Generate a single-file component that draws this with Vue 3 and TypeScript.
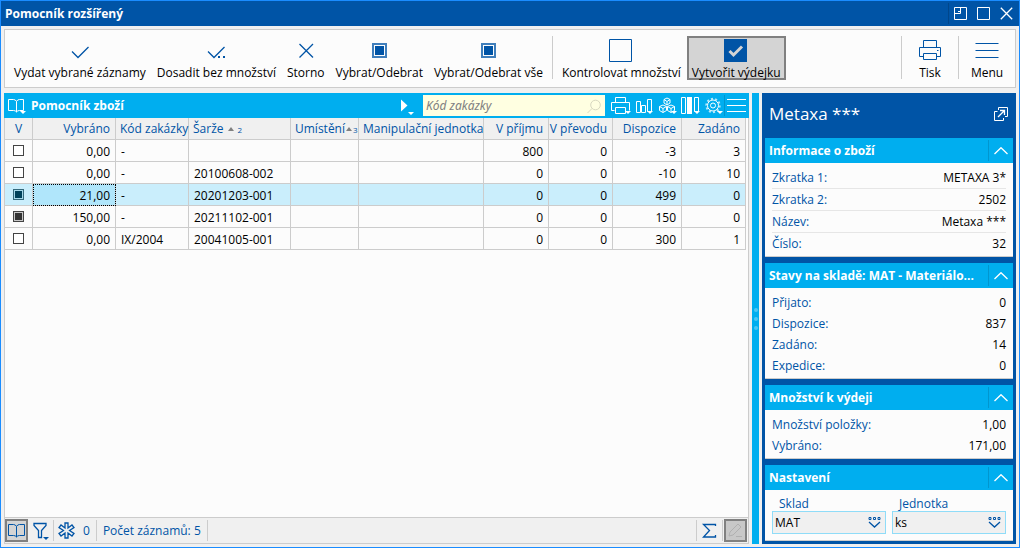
<script setup lang="ts">
import { ref } from 'vue'

interface Row {
  mark: 'none' | 'full'
  picked: string
  order: string
  batch: string
  incoming: string
  transfer: string
  available: string
  entered: string
}

interface InfoGroup {
  title: string
  lined?: boolean
  rows: { label: string; value: string }[]
}

const rows = ref<Row[]>([
  { mark: 'none', picked: '0,00', order: '-', batch: '', incoming: '800', transfer: '0', available: '-3', entered: '3' },
  { mark: 'none', picked: '0,00', order: '-', batch: '20100608-002', incoming: '0', transfer: '0', available: '-10', entered: '10' },
  { mark: 'full', picked: '21,00', order: '-', batch: '20201203-001', incoming: '0', transfer: '0', available: '499', entered: '0' },
  { mark: 'full', picked: '150,00', order: '-', batch: '20211102-001', incoming: '0', transfer: '0', available: '150', entered: '0' },
  { mark: 'none', picked: '0,00', order: 'IX/2004', batch: '20041005-001', incoming: '0', transfer: '0', available: '300', entered: '1' },
])
const current = ref(2)

const groups: InfoGroup[] = [
  {
    title: 'Informace o zboží',
    lined: true,
    rows: [
      { label: 'Zkratka 1:', value: 'METAXA 3*' },
      { label: 'Zkratka 2:', value: '2502' },
      { label: 'Název:', value: 'Metaxa ***' },
      { label: 'Číslo:', value: '32' },
    ],
  },
  {
    title: 'Stavy na skladě: MAT - Materiálo...',
    rows: [
      { label: 'Přijato:', value: '0' },
      { label: 'Dispozice:', value: '837' },
      { label: 'Zadáno:', value: '14' },
      { label: 'Expedice:', value: '0' },
    ],
  },
  {
    title: 'Množství k výdeji',
    rows: [
      { label: 'Množství položky:', value: '1,00' },
      { label: 'Vybráno:', value: '171,00' },
    ],
  },
]

const search = ref('')
const store = ref('MAT')
const unit = ref('ks')

function toggle(row: Row) {
  row.mark = row.mark === 'none' ? 'full' : 'none'
}
</script>

<template>
  <div class="window">
    <header class="titlebar">
      <h1>Pomocník rozšířený</h1>
      <div class="wincontrols">
        <button type="button" aria-label="Ukotvit">
          <svg width="13" height="13" viewBox="0 0 13 13"><path d="M.5 .5h12v12H.5zM.5 6.5h6V.5M4 4.5h2.5" /></svg>
        </button>
        <button type="button" aria-label="Maximalizovat">
          <svg width="13" height="13" viewBox="0 0 13 13"><path d="M.5 .5h12v12H.5z" /></svg>
        </button>
        <button type="button" aria-label="Zavřít">
          <svg width="13" height="13" viewBox="0 0 13 13"><path class="firm" d="M.8 .8l11.4 11.4M12.2 .8L.8 12.2" /></svg>
        </button>
      </div>
    </header>

    <nav class="toolbar">
      <button type="button" class="tool">
        <svg width="24" height="24" viewBox="0 0 24 24"><path class="firm" d="M4 12.500l6 6L20.500 8" /></svg>
        <span>Vydat vybrané záznamy</span>
      </button>
      <button type="button" class="tool">
        <svg width="24" height="24" viewBox="0 0 24 24"><path class="firm" d="M4 12.500l6 6L20.500 8" /><path class="solid" d="M14 17h2v2h-2zM19 17h2v2h-2z" /></svg>
        <span>Dosadit bez množství</span>
      </button>
      <button type="button" class="tool">
        <svg width="24" height="24" viewBox="0 0 24 24"><path class="firm" d="M5.500 5l13.500 13.500M19 5L5.500 18.500" /></svg>
        <span>Storno</span>
      </button>
      <button type="button" class="tool">
        <svg width="24" height="24" viewBox="0 0 24 24"><path class="soft" d="M6 5h13v13H6z" /><path class="solid" d="M8 7h9v9H8z" /></svg>
        <span>Vybrat/Odebrat</span>
      </button>
      <button type="button" class="tool">
        <svg width="24" height="24" viewBox="0 0 24 24"><path class="soft" d="M6 5h13v13H6z" /><path class="solid" d="M8 7h9v9H8z" /></svg>
        <span>Vybrat/Odebrat vše</span>
      </button>
      <i class="rule"></i>
      <button type="button" class="tool">
        <svg width="24" height="24" viewBox="0 0 24 24"><path d="M.5 .5h22v22H.5z" /></svg>
        <span>Kontrolovat množství</span>
      </button>
      <button type="button" class="tool pressed" aria-pressed="true">
        <svg width="24" height="24" viewBox="0 0 24 24"><path class="solid" d="M0 0h23v23H0z" /><path class="tick" d="M5.500 12l4 4L18 7.500" /></svg>
        <span>Vytvořit výdejku</span>
      </button>
      <div class="spacer"></div>
      <i class="rule"></i>
      <button type="button" class="tool narrow">
        <svg width="24" height="24" viewBox="0 0 24 24"><path d="M5.500 8V1.500h13V8M5 17.500H1.500v-9h21v9H19M5.500 14.500h13v6h-13zM19 11.500h1.500" /></svg>
        <span>Tisk</span>
      </button>
      <i class="rule"></i>
      <button type="button" class="tool narrow">
        <svg width="24" height="24" viewBox="0 0 24 24"><path d="M.5 4.500h23M.5 11.500h23M.5 18.500h23" /></svg>
        <span>Menu</span>
      </button>
    </nav>

    <main class="content">
      <section class="browse">
        <div class="bar">
          <button type="button" class="baricon book" aria-label="Přehled">
            <svg width="23" height="21" viewBox="0 0 23 21"><path d="M12.500 6.500q-1-2-3-2h-5v11h5q2 0 3 1.500q1-1.500 3-1.500h4v-11h-4q-2 0-3 2zV17" /><path class="fill" d="M16 16h6l-3 3z" /></svg>
          </button>
          <h2>Pomocník zboží</h2>
          <button type="button" class="baricon play" aria-label="Spustit">
            <svg width="23" height="21" viewBox="0 0 23 21"><path class="fill" d="M4 4.500l6.500 6-6.500 6zM11 17h6l-3 3z" /></svg>
          </button>
          <div class="search">
            <input v-model="search" type="text" aria-label="Kód zakázky" placeholder="Kód zakázky" />
            <svg width="16" height="16" viewBox="0 0 16 16"><circle cx="9.500" cy="6" r="4.800" /><path d="M6 9.500L1.500 14" /></svg>
          </div>
          <button type="button" class="baricon" aria-label="Tisk">
            <svg width="23" height="21" viewBox="0 0 23 21"><path d="M6.500 8V2.500h10V8M5.500 15.500h-3v-8h18v8M6.500 12.500h10v6h-10z" /><path class="fill" d="M16 16h6l-3 3z" /></svg>
          </button>
          <button type="button" class="baricon" aria-label="Grafy">
            <svg width="23" height="21" viewBox="0 0 23 21"><path d="M4.500 6.500h4v11h-4zM9.500 10.500h4v7h-4zM15.500 4.500h4v12h-4z" /><path class="fill" d="M15 16h6l-3 3z" /></svg>
          </button>
          <button type="button" class="baricon" aria-label="Kontingenční tabulka">
            <svg width="23" height="21" viewBox="0 0 23 21"><path d="M12 3l3 1.500v3.500l-3 2-3-2V4.500zM9 4.500l3 2 3-2M12 6.500V10M8 10l3.500 1.500v4L8 17.500l-3.500-2v-4zM4.500 11.500l3.500 2 3.500-2M8 13.500v4M16 10l3.500 1.500v4L16 17.500l-3.500-2v-4zM12.500 11.500l3.500 2 3.500-2M16 13.500v4" /><path class="fill" d="M16 16h6l-3 3z" /></svg>
          </button>
          <button type="button" class="baricon" aria-label="Sloupce">
            <svg width="23" height="21" viewBox="0 0 23 21"><path d="M3.500 2.500h4v16h-4zM16.500 2.500h4v14h-4z" /><path class="fill" d="M9 2h5v17H9zM16 16h6l-3 3z" /></svg>
          </button>
          <button type="button" class="baricon" aria-label="Nastavení">
            <svg width="23" height="21" viewBox="0 0 23 21"><circle cx="12" cy="10.500" r="5.500" /><circle cx="12" cy="10.500" r="2.500" /><circle class="teeth" cx="12" cy="10.500" r="6.700" pathLength="20" /><path class="fill" d="M16 16h6l-3 3z" /></svg>
          </button>
          <button type="button" class="baricon last" aria-label="Menu">
            <svg width="24" height="21" viewBox="0 0 24 21"><path d="M2 4.500h19M2 10.500h19M2 16.500h19" /></svg>
          </button>
        </div>

        <div class="gridbox">
          <table>
            <colgroup>
              <col class="c-mark" /><col class="c-picked" /><col class="c-order" /><col class="c-batch" /><col class="c-place" />
              <col class="c-unit" /><col class="c-in" /><col class="c-trans" /><col class="c-avail" /><col class="c-ent" />
            </colgroup>
            <thead>
              <tr>
                <th class="mid">V</th>
                <th class="num">Vybráno</th>
                <th>Kód zakázky</th>
                <th>Šarže<i class="sort wide"></i><small>2</small></th>
                <th>Umístění<i class="sort"></i><small>3</small></th>
                <th>Manipulační jednotka</th>
                <th class="num">V příjmu</th>
                <th class="num">V převodu</th>
                <th class="num">Dispozice</th>
                <th class="num">Zadáno</th>
              </tr>
            </thead>
            <tbody>
              <tr v-for="(row, i) in rows" :key="i" :class="{ current: i === current }" @click="current = i">
                <td class="mid">
                  <input type="checkbox" :checked="row.mark === 'full'" :aria-label="'Vybrat ' + row.batch" @change="toggle(row)" />
                </td>
                <td class="num" :class="{ focus: i === current }">{{ row.picked }}</td>
                <td>{{ row.order }}</td>
                <td>{{ row.batch }}</td>
                <td></td>
                <td></td>
                <td class="num">{{ row.incoming }}</td>
                <td class="num">{{ row.transfer }}</td>
                <td class="num">{{ row.available }}</td>
                <td class="num">{{ row.entered }}</td>
              </tr>
            </tbody>
          </table>
        </div>

        <footer class="status">
          <button type="button" class="square" aria-label="Přehled">
            <svg width="19" height="19" viewBox="0 0 19 19"><path d="M9.500 5.500q-1-2-3-2h-5v11h5q2 0 3 1.500q1-1.500 3-1.500h5v-11h-5q-2 0-3 2zV16" /></svg>
          </button>
          <button type="button" class="flat" aria-label="Filtr">
            <svg width="23" height="21" viewBox="0 0 23 21"><path class="firm" d="M5 3.500h12v2l-4.500 5v7h-3v-7L5 5.500z" /><path class="fill" d="M14 17h6l-3 3z" /></svg>
          </button>
          <i class="rule"></i>
          <button type="button" class="flat count">
            <svg width="19" height="21" viewBox="0 0 19 21"><path class="firm" d="M8 3h3v5l4-3 2 2.500-4.500 3 4.500 3-2 2.500-4-3v5H8v-5l-4 3-2-2.500 4.500-3-4.500-3L4 5l4 3z" /></svg>
            <span>0</span>
          </button>
          <i class="rule"></i>
          <span class="records">Počet záznamů: 5</span>
          <i class="rule"></i>
          <div class="spacer"></div>
          <i class="rule"></i>
          <button type="button" class="flat" aria-label="Součet">
            <svg width="23" height="21" viewBox="0 0 23 21"><path class="firm" d="M17.500 6V4.500h-12l6 6-6 6.500h12V15" /></svg>
          </button>
          <i class="rule"></i>
          <button type="button" class="square off" aria-label="Upravit" disabled>
            <svg width="19" height="19" viewBox="0 0 19 19"><path d="M3 15l1-4 8-8 3 3-8 8zM10 15.500h6" /></svg>
          </button>
        </footer>
      </section>

      <div class="splitter"><i></i><i></i><i></i></div>

      <aside class="detail">
        <header>
          <h2>Metaxa ***</h2>
          <button type="button" aria-label="Otevřít v novém okně">
            <svg width="14" height="14" viewBox="0 0 14 14"><path d="M4.500 3V.5h9v9H11M3.500 4.500h-3v9h9V11" /><path class="firm" d="M4 10l6-6M6 3.500h4.500V8" /></svg>
          </button>
        </header>

        <div class="groups">
          <section v-for="g in groups" :key="g.title" class="group">
            <div class="ghead">
              <h3>{{ g.title }}</h3>
              <button type="button" aria-label="Sbalit">
                <svg width="14" height="8" viewBox="0 0 14 8"><path class="firm" d="M.5 7l6.500-6.300L13.500 7" /></svg>
              </button>
            </div>
            <dl :class="{ lined: g.lined }">
              <div v-for="r in g.rows" :key="r.label">
                <dt>{{ r.label }}</dt>
                <dd>{{ r.value }}</dd>
              </div>
            </dl>
          </section>

          <section class="group">
            <div class="ghead">
              <h3>Nastavení</h3>
              <button type="button" aria-label="Sbalit">
                <svg width="14" height="8" viewBox="0 0 14 8"><path class="firm" d="M.5 7l6.500-6.300L13.500 7" /></svg>
              </button>
            </div>
            <div class="fields">
              <div class="field">
                <label for="store">Sklad</label>
                <div class="pick">
                  <select id="store" v-model="store"><option>MAT</option></select>
                  <svg width="13" height="11" viewBox="0 0 13 11"><path d="M1 .5h2v2H1zM5.500 .5h2v2h-2zM10 .5h2v2h-2z" /><path class="firm" d="M1 5l5.500 5L12 5" /></svg>
                </div>
              </div>
              <div class="field">
                <label for="unit">Jednotka</label>
                <div class="pick">
                  <select id="unit" v-model="unit"><option>ks</option></select>
                  <svg width="13" height="11" viewBox="0 0 13 11"><path d="M1 .5h2v2H1zM5.500 .5h2v2h-2zM10 .5h2v2h-2z" /><path class="firm" d="M1 5l5.500 5L12 5" /></svg>
                </div>
              </div>
            </div>
          </section>
        </div>
      </aside>
    </main>
  </div>
</template>

<style>
html,
body {
  margin: 0;
  background: #f0f0f0;
}
</style>

<style scoped>
.window {
  --navy: #0054a6;
  --sky: #00aeef;
  --line: #cccccc;
  --paper: #fcfcfc;
  box-sizing: border-box;
  min-height: 100vh;
  display: flex;
  flex-direction: column;
  border: 1px solid #1a8cff;
  background: #f0f0f0;
  color: #000;
  font: 12px/16px 'Open Sans', 'Noto Sans', sans-serif;
}
* {
  box-sizing: border-box;
}
h1,
h2,
h3,
dl,
dd {
  margin: 0;
}
h1,
h2,
h3 {
  font-size: 12px;
}
button {
  font: inherit;
  color: inherit;
  border: 0;
  padding: 0;
  background: none;
}
svg {
  display: block;
  flex: none;
  fill: none;
  stroke: currentColor;
}
.firm {
  stroke-width: 1.3;
}
.fill,
.solid {
  fill: currentColor;
  stroke: none;
}
.spacer {
  flex: 1;
}
.rule {
  width: 1px;
  background: var(--line);
}

.titlebar {
  display: flex;
  justify-content: space-between;
  height: 25px;
  background: var(--navy);
  color: #fff;
}
.titlebar h1 {
  padding-left: 4px;
  line-height: 25px;
}
.wincontrols {
  display: flex;
  align-items: center;
  gap: 10px;
  margin: 2px 0;
  padding: 0 6px 0 5px;
  border-left: 1px solid #00468b;
}

.toolbar {
  display: flex;
  gap: 1px;
  height: 59px;
  margin: 3px 3px 5px;
  padding: 6px 4px;
  border: 1px solid var(--line);
  background: var(--paper);
}
.toolbar .rule {
  height: 43px;
  margin: 0 3px;
}
.tool {
  display: flex;
  flex-direction: column;
  align-items: center;
  height: 44px;
  padding: 1px 3px 0;
  border: 2px solid transparent;
  white-space: nowrap;
}
.tool svg {
  color: var(--navy);
}
.tool span {
  margin-top: 2px;
}
.tool.pressed {
  border-color: #808080;
  background: #d4d4d4;
}
.tool.narrow {
  min-width: 48px;
}
.soft {
  stroke-width: 2;
  opacity: 0.75;
}
.tick {
  stroke: #d4d4d4;
  stroke-width: 3;
}

.content {
  flex: 1;
  display: grid;
  grid-template-columns: minmax(0, 1fr) 7px 254px;
  gap: 3px;
  padding: 0 3px 3px;
}

.browse {
  display: flex;
  flex-direction: column;
  min-width: 0;
}
.bar {
  display: flex;
  align-items: center;
  height: 25px;
  background: var(--sky);
  color: #fff;
}
.bar h2 {
  flex: 1;
  padding-left: 4px;
}
.baricon.play {
  margin-right: 3px;
}
.baricon.last {
  border-left: 1px solid #0096cf;
}
.teeth {
  stroke-width: 2;
  stroke-dasharray: 1 1;
  opacity: 0.7;
}
.search {
  position: relative;
  width: 182px;
  height: 21px;
  margin-right: 4px;
  color: #d8d8c0;
}
.search input {
  width: 100%;
  height: 100%;
  padding: 0 22px 0 3px;
  border: 0;
  background: #ffffe1;
  font: italic 12px/16px 'Noto Sans', 'Open Sans', sans-serif;
}
.search input::placeholder {
  color: #808080;
}
.search svg {
  position: absolute;
  top: 4px;
  right: 3px;
}

.gridbox {
  flex: 1;
  padding-right: 2px;
  border: 1px solid var(--line);
  border-top: 0;
  background: var(--paper);
}
table {
  width: 100%;
  table-layout: fixed;
  border-collapse: separate;
  border-spacing: 0;
}
.c-mark { width: 28px; }
.c-picked { width: 83px; }
.c-order { width: 73px; }
.c-batch { width: 102px; }
.c-place { width: 68px; }
.c-in { width: 65px; }
.c-trans { width: 64px; }
.c-avail { width: 69px; }
.c-ent { width: 64px; }
th,
td {
  height: 22px;
  padding: 2px 5px 0;
  border-right: 1px solid var(--line);
  border-bottom: 1px solid var(--line);
  text-align: left;
  font-weight: 400;
  white-space: nowrap;
}
th {
  padding: 0 0 0 4px;
  background: #f0f0f0;
  color: var(--navy);
}
th.num {
  padding: 0 5px 0 0;
}
.num {
  text-align: right;
}
.mid,
th.mid {
  padding: 0;
  text-align: center;
}
.sort {
  display: inline-block;
  margin: 0 1px;
  border: 3px solid transparent;
  border-top: 0;
  border-bottom: 4px solid #808080;
  vertical-align: 2px;
}
.sort.wide {
  margin: 0 4px;
}
th small {
  font-size: 8px;
  line-height: 8px;
}
.current td {
  background: #caeefc;
}
.current td.focus {
  background: #b0e6fb;
  outline: 1px dotted #000;
  outline-offset: -1px;
}
td input {
  appearance: none;
  display: block;
  width: 11px;
  height: 11px;
  margin: 0 auto;
  border: 1px solid #444;
  background: #fff;
}
td input:checked {
  background: #333;
  box-shadow: inset 0 0 0 1px #c8c8c8;
}
.current input:checked {
  border-color: #35697c;
  background: #00415a;
  box-shadow: inset 0 0 0 1px #a5d8ea;
}

.status {
  display: flex;
  align-items: center;
  height: 26px;
  padding-right: 1px;
  border: 1px solid var(--line);
  border-top: 0;
  color: var(--navy);
}
.status .rule {
  height: 21px;
}
.square {
  width: 23px;
  height: 23px;
  border: 2px solid #808080;
  background: #d4d4d4;
}
.square.off {
  margin-left: 1px;
  background: #c8c8c8;
  color: #b0b0b0;
}
.flat {
  display: flex;
  align-items: center;
}
.flat:not(.count) {
  padding: 0 1px;
}
.count {
  gap: 7px;
  padding: 0 6px 0 3px;
}
.records {
  padding: 0 6px;
}

.splitter {
  display: flex;
  flex-direction: column;
  align-items: center;
  justify-content: center;
  gap: 5px;
  background: var(--sky);
}
.splitter i {
  width: 4px;
  height: 4px;
  border-radius: 50%;
  background: #4cc6f4;
}

.detail {
  padding: 0 3px 3px;
  background: var(--navy);
}
.detail header {
  display: flex;
  align-items: center;
  justify-content: space-between;
  height: 45px;
  padding: 0 5px 4px 4px;
  color: #fff;
}
.detail header h2 {
  font-size: 17px;
  font-weight: 400;
  line-height: 24px;
}
.groups {
  display: flex;
  flex-direction: column;
  gap: 6px;
}
.group {
  background: var(--paper);
  border-bottom: 1px solid var(--line);
}
.ghead {
  display: flex;
  align-items: center;
  height: 25px;
  background: var(--sky);
  color: #fff;
}
.ghead h3 {
  flex: 1;
  min-width: 0;
  padding-left: 4px;
  overflow: hidden;
  text-overflow: ellipsis;
  white-space: nowrap;
}
.ghead button {
  display: grid;
  place-items: center;
  width: 25px;
  height: 21px;
  border-left: 1px solid #0096cf;
}
dl {
  padding: 4px 7px 2px;
}
dl div {
  display: flex;
  justify-content: space-between;
  line-height: 21px;
}
dt,
label {
  color: var(--navy);
}
.lined div + div {
  border-top: 1px solid #e6e6e6;
}
.fields {
  display: grid;
  grid-template-columns: 1fr 1fr;
  gap: 6px;
  padding: 7px 7px 6px;
}
.field label {
  display: block;
  padding-left: 7px;
  line-height: 14px;
}
.pick {
  position: relative;
  color: var(--navy);
}
.pick select {
  appearance: none;
  display: block;
  width: 100%;
  height: 23px;
  padding: 0 20px 0 2px;
  border: 1px solid #8fdcf8;
  border-radius: 0;
  background: #f0f0f0;
  color: #000;
  font: inherit;
}
.pick svg {
  position: absolute;
  top: 6px;
  right: 5px;
  pointer-events: none;
}
</style>
